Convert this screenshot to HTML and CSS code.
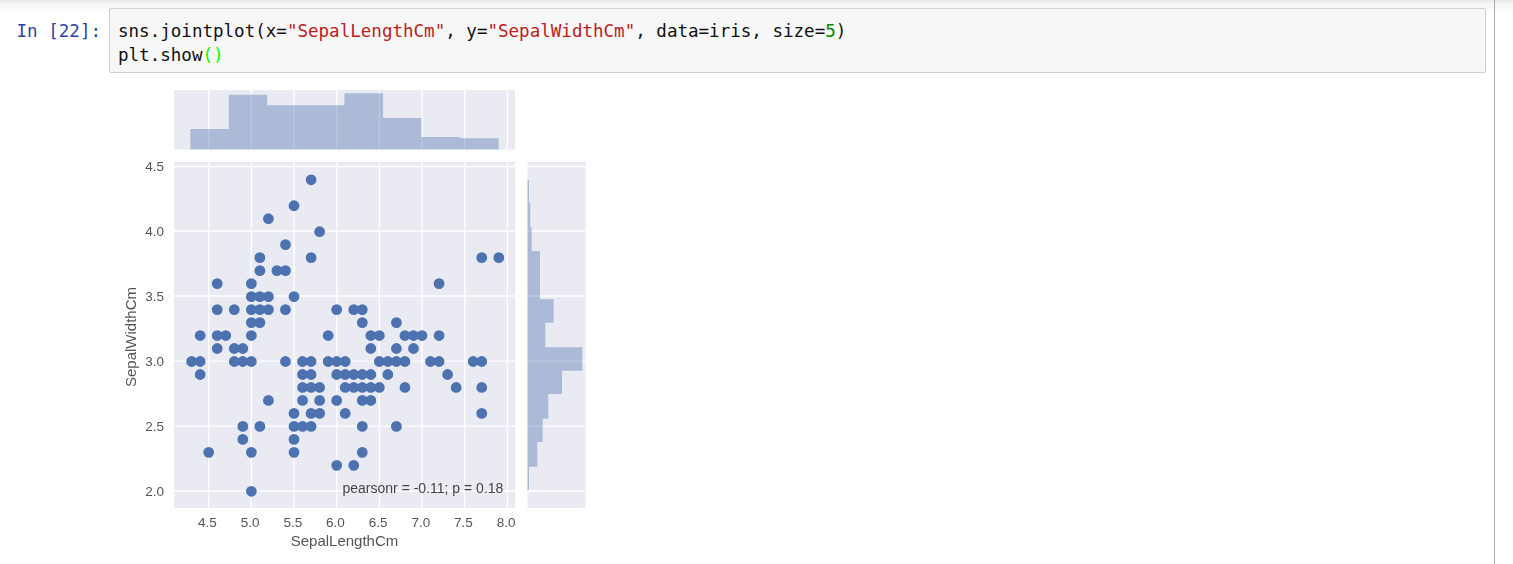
FILE: index.html
```html
<!DOCTYPE html>
<html lang="en">
<head>
<meta charset="utf-8">
<title>Notebook</title>
<link rel="stylesheet" href="styles.css">
</head>
<body>
<div class="page">
  <main class="notebook">
    <section class="cell">
      <div class="prompt">In&nbsp;[22]:</div>
      <div class="content">
        <pre class="code"><span>sns.jointplot(x=</span><span class="str">"SepalLengthCm"</span><span>, y=</span><span class="str">"SepalWidthCm"</span><span>, data=iris, size=</span><span class="num">5</span><span>)</span>
<span>plt.show</span><span class="paren">()</span></pre>
        <svg class="plot" width="490" height="476" viewBox="0 0 490 476" role="img" aria-label="Joint plot of SepalLengthCm and SepalWidthCm">
          <!-- origin: x 109, y 78 in page coordinates -->
          <g transform="translate(-109 -78)">
            <rect class="ax" x="174" y="90" width="341" height="59.5"/>
            <rect class="ax" x="174" y="162" width="341" height="346"/>
            <rect class="ax" x="527.5" y="162" width="58" height="346"/>
            <path class="grid" d="M208.7 90v59.5M251.3 90v59.5M294 90v59.5M336.7 90v59.5M379.3 90v59.5M422 90v59.5M464.7 90v59.5M507.3 90v59.5"/>
            <path class="grid" d="M208.7 162V508M251.3 162V508M294 162V508M336.7 162V508M379.3 162V508M422 162V508M464.7 162V508M507.3 162V508"/>
            <path class="grid" d="M174 166.5H515M174 231H515M174 296H515M174 361.2H515M174 426.2H515M174 491H515"/>
            <path class="grid" d="M527.5 166.5H585.5M527.5 231H585.5M527.5 296H585.5M527.5 361.2H585.5M527.5 426.2H585.5M527.5 491H585.5"/>
            <path class="bars" d="M190.3 149.5V129H228.9V94.7H267.1V105.3H344.4V93.3H383.1V118H421.3V137H460.4V138.3H498.7V149.5Z"/>
            <path class="bars" d="M527.5 180H529V203.3H530.3V227.3H531.7V251H540V299.3H553.7V322.7H545.3V347.3H582.3V370.7H562V394H548.3V418.7H542.7V442H537.3V466.7H529V490H527.5Z"/>
            <g class="dots" transform="translate(-175.3 750.9) scale(85.33 -129.8)">
              <path d="M5.1 3.5h0M4.9 3h0M4.7 3.2h0M4.6 3.1h0M5 3.6h0M5.4 3.9h0M4.6 3.4h0M5 3.4h0M4.4 2.9h0M4.9 3.1h0M5.4 3.7h0M4.8 3.4h0M4.8 3h0M4.3 3h0M5.8 4h0M5.7 4.4h0M5.7 3.8h0M5.1 3.8h0M5.4 3.4h0M5.1 3.7h0M4.6 3.6h0M5.1 3.3h0M5 3h0M5.2 3.5h0M5.2 3.4h0M4.8 3.1h0M5.2 4.1h0M5.5 4.2h0M5 3.2h0M5.5 3.5h0M4.4 3h0M5.1 3.4h0M5 3.5h0M4.5 2.3h0M4.4 3.2h0M4.6 3.2h0M5.3 3.7h0M5 3.3h0M7 3.2h0M6.4 3.2h0M6.9 3.1h0M5.5 2.3h0M6.5 2.8h0M5.7 2.8h0M6.3 3.3h0M4.9 2.4h0M6.6 2.9h0M5.2 2.7h0M5 2h0M5.9 3h0M6 2.2h0M6.1 2.9h0M5.6 2.9h0M6.7 3.1h0M5.6 3h0M5.8 2.7h0M6.2 2.2h0M5.6 2.5h0M5.9 3.2h0M6.1 2.8h0M6.3 2.5h0M6.4 2.9h0M6.6 3h0M6.8 2.8h0M6.7 3h0M6 2.9h0M5.7 2.6h0M5.5 2.4h0M6 2.7h0M5.4 3h0M6 3.4h0M6.3 2.3h0M5.5 2.5h0M5.5 2.6h0M6.1 3h0M5.8 2.6h0M5 2.3h0M5.6 2.7h0M5.7 3h0M5.7 2.9h0M6.2 2.9h0M5.1 2.5h0M7.1 3h0M6.3 2.9h0M6.5 3h0M7.6 3h0M4.9 2.5h0M7.3 2.9h0M6.7 2.5h0M7.2 3.6h0M6.5 3.2h0M6.4 2.7h0M6.8 3h0M5.7 2.5h0M5.8 2.8h0M7.7 3.8h0M7.7 2.6h0M6.9 3.2h0M5.6 2.8h0M7.7 2.8h0M6.3 2.7h0M6.7 3.3h0M7.2 3.2h0M6.2 2.8h0M6.4 2.8h0M7.2 3h0M7.4 2.8h0M7.9 3.8h0M6.3 2.8h0M6.1 2.6h0M7.7 3h0M6.3 3.4h0M6.4 3.1h0M6 3h0M6.8 3.2h0M6.2 3.4h0"/>
            </g>
            <g class="ticks ticks-y">
              <text x="164" y="171">4.5</text>
              <text x="164" y="235.5">4.0</text>
              <text x="164" y="300.5">3.5</text>
              <text x="164" y="365.7">3.0</text>
              <text x="164" y="430.7">2.5</text>
              <text x="164" y="495.5">2.0</text>
            </g>
            <g class="ticks ticks-x">
              <text x="207.5" y="527">4.5</text>
              <text x="250.2" y="527">5.0</text>
              <text x="292.8" y="527">5.5</text>
              <text x="335.5" y="527">6.0</text>
              <text x="378.2" y="527">6.5</text>
              <text x="420.8" y="527">7.0</text>
              <text x="463.5" y="527">7.5</text>
              <text x="506.2" y="527">8.0</text>
            </g>
            <text class="label" x="344.5" y="546">SepalLengthCm</text>
            <text class="label" transform="translate(136 337) rotate(-90)">SepalWidthCm</text>
            <text class="note" x="342.5" y="493">pearsonr = -0.11; p = 0.18</text>
          </g>
        </svg>
      </div>
    </section>
  </main>
</div>
</body>
</html>
```
FILE: styles.css
```css
html, body {
  margin: 0;
  height: 100%;
  background: #fff;
  overflow: hidden;
}

.page {
  height: 564px;
  box-sizing: border-box;
  background: linear-gradient(#e9e9e9 0, #f4f4f4 3px, #fff 12px);
}

.notebook {
  width: 1495px;
  height: 564px;
  box-sizing: border-box;
  border-right: 1px solid #ababab;
  padding-top: 8px;
}

.cell {
  display: flex;
  width: 1486px;
}

.prompt {
  width: 109px;
  flex: none;
  box-sizing: border-box;
  padding: 11px 8px 0 0;
  text-align: right;
  color: #303f9f;
  font: 17.55px/24px "DejaVu Sans Mono", monospace;
}

.content {
  flex: 1;
  min-width: 0;
}

.code {
  margin: 0;
  height: 65px;
  box-sizing: border-box;
  padding: 10px 8px 0;
  background: #f7f7f7;
  border: 1px solid #cfcfcf;
  border-radius: 2px;
  color: #111;
  font: 17.55px/24px "DejaVu Sans Mono", monospace;
}

.str { color: #ba2121; }
.num { color: #080; }
.paren { color: #0f0; }

.plot {
  display: block;
  margin-top: 5px;
  filter: blur(0.45px);
}

.ax { fill: #eaeaf2; }

.grid {
  fill: none;
  stroke: #fff;
  stroke-width: 1.3;
}

.bars {
  fill: #4c72b0;
  fill-opacity: 0.4;
}

.dots path {
  fill: none;
  stroke: #4c72b0;
  stroke-width: 10.8px;
  stroke-linecap: round;
  vector-effect: non-scaling-stroke;
}

.ticks, .label, .note {
  font-family: "Liberation Sans", Arial, sans-serif;
  fill: #555;
}

.ticks { font-size: 13.5px; }
.ticks-y { text-anchor: end; }
.ticks-x { text-anchor: middle; }
.label { font-size: 15px; text-anchor: middle; }
.note { font-size: 14px; fill: #444; }
```
